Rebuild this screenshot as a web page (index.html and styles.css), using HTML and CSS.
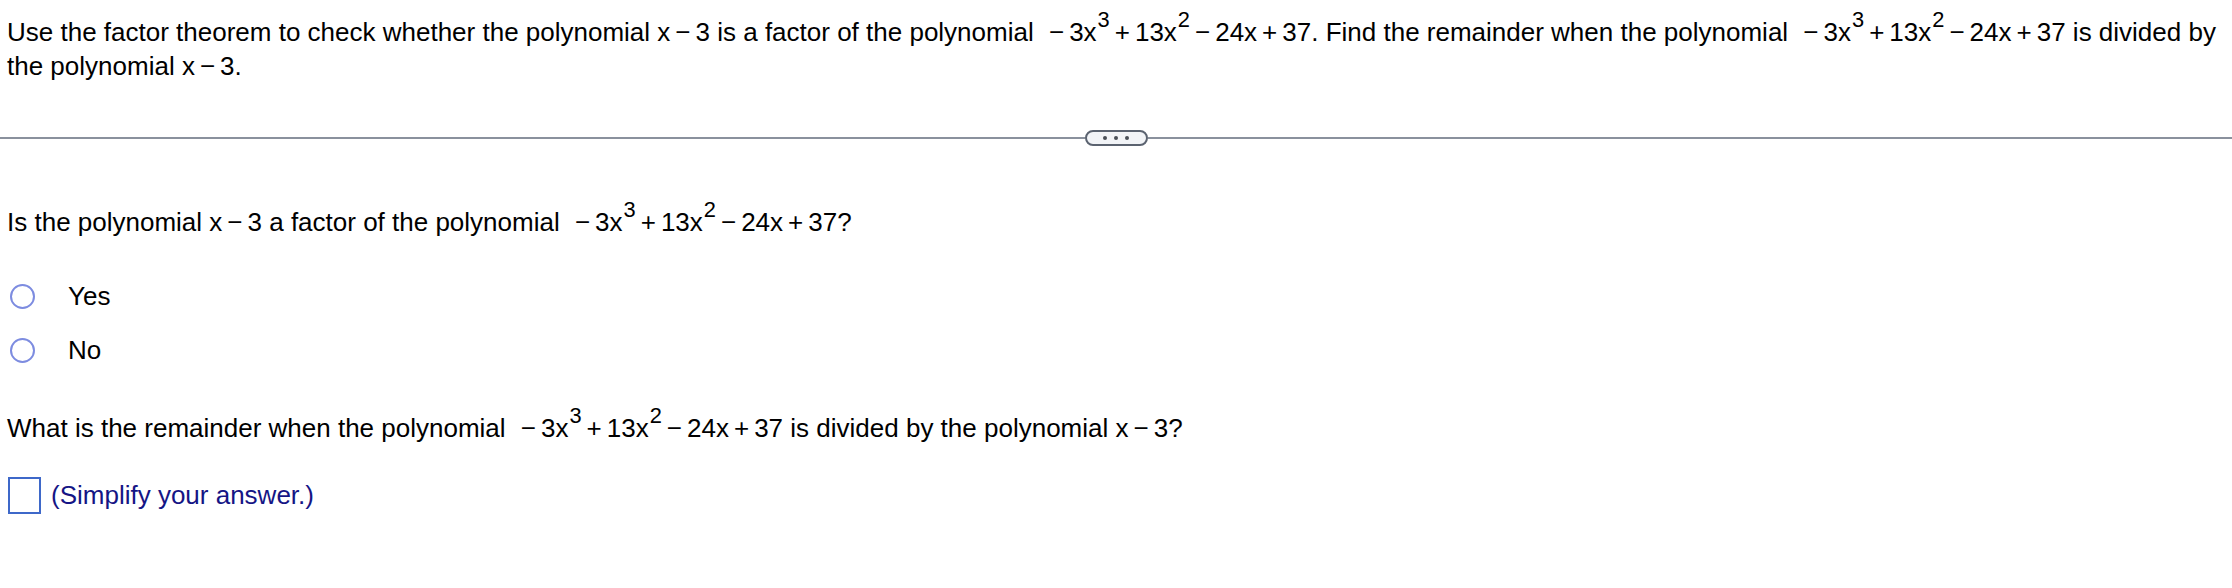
FILE: index.html
```html
<!DOCTYPE html>
<html>
<head>
<meta charset="utf-8">
<link rel="stylesheet" href="styles.css">
</head>
<body>
<div class="page">
  <p class="question">Use the factor theorem to check whether the polynomial x<span class="op">−</span>3 is a factor of the polynomial <span class="poly"><span class="op lead">−</span>3x<sup>3</sup><span class="op">+</span>13x<sup>2</sup><span class="op">−</span>24x<span class="op">+</span>37</span>. Find the remainder when the polynomial <span class="poly"><span class="op lead">−</span>3x<sup>3</sup><span class="op">+</span>13x<sup>2</sup><span class="op">−</span>24x<span class="op">+</span>37</span> is divided by the polynomial x<span class="op">−</span>3.</p>

  <div class="divider">
    <span class="rule"></span>
    <span class="more"><i></i><i></i><i></i></span>
    <span class="rule"></span>
  </div>

  <p class="part first">Is the polynomial x<span class="op">−</span>3 a factor of the polynomial <span class="poly"><span class="op lead">−</span>3x<sup>3</sup><span class="op">+</span>13x<sup>2</sup><span class="op">−</span>24x<span class="op">+</span>37</span>?</p>

  <ul class="choices">
    <li><span class="radio"></span><span class="label">Yes</span></li>
    <li><span class="radio"></span><span class="label">No</span></li>
  </ul>

  <p class="part second">What is the remainder when the polynomial <span class="poly"><span class="op lead">−</span>3x<sup>3</sup><span class="op">+</span>13x<sup>2</sup><span class="op">−</span>24x<span class="op">+</span>37</span> is divided by the polynomial x<span class="op">−</span>3?</p>

  <div class="answer">
    <span class="box"></span>
    <span class="hint">(Simplify your answer.)</span>
  </div>
</div>
</body>
</html>
```

FILE: styles.css
```css
html, body {
  margin: 0;
  padding: 0;
  background: #ffffff;
}

body {
  font-family: "Liberation Sans", Arial, sans-serif;
  font-size: 26px;
  color: #000000;
}

.page {
  padding: 15px 0 0 7px;
}

p {
  margin: 0;
}

.question {
  line-height: 34px;
  padding-right: 4px;
}

.op {
  margin: 0 5px;
}

.op.lead {
  margin-left: 8px;
}

sup {
  font-size: 0.84em;
  line-height: 0;
  vertical-align: 0.62em;
  margin-left: 1px;
}

.divider {
  display: flex;
  align-items: center;
  margin: 46px 0 0 -7px;
  height: 18px;
}

.rule {
  flex: 1;
  height: 2px;
  background: #8a919d;
}

.more {
  display: flex;
  align-items: center;
  justify-content: center;
  gap: 7px;
  width: 59px;
  height: 12px;
  border: 2px solid #5b6370;
  border-radius: 9px;
  background: #f2f4f7;
}

.more i {
  width: 4px;
  height: 4px;
  border-radius: 50%;
  background: #4a4f57;
}

.part {
  line-height: 33px;
}

.part.first {
  margin-top: 59px;
}

.choices {
  list-style: none;
  margin: 30px 0 0 0;
  padding: 0;
}

.choices li {
  display: flex;
  align-items: center;
  height: 54px;
}

.radio {
  width: 25px;
  height: 25px;
  border: 2px solid #7d8ce0;
  border-radius: 50%;
  margin-left: 3px;
  box-sizing: border-box;
}

.label {
  margin-left: 33px;
}

.part.second {
  margin-top: 35px;
}

.answer {
  display: flex;
  align-items: center;
  margin-top: 32px;
}

.box {
  width: 33px;
  height: 37px;
  border: 2px solid #3e68c9;
  box-sizing: border-box;
  margin-left: 1px;
}

.hint {
  color: #151585;
  margin-left: 10px;
}
```
